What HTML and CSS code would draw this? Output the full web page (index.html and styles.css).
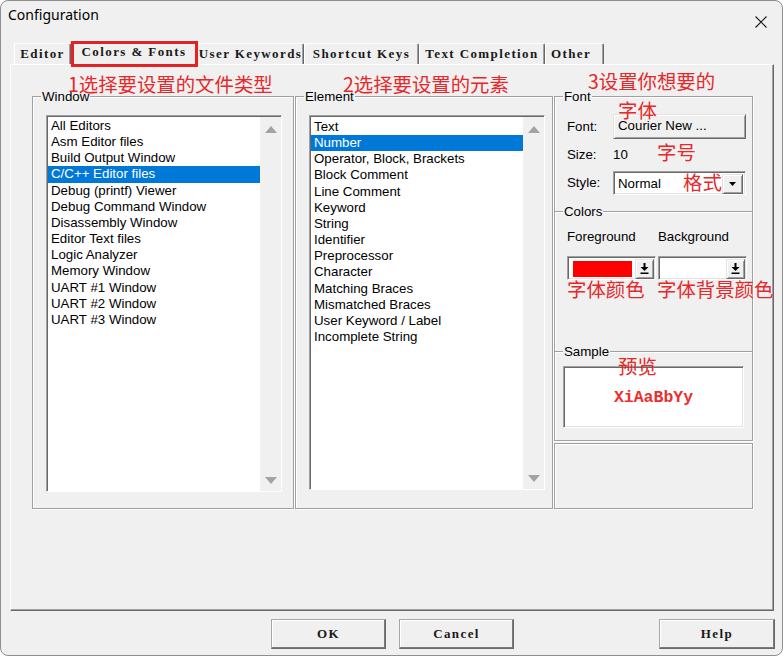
FILE: index.html
```html
<!DOCTYPE html>
<html>
<head>
<meta charset="utf-8">
<title>Configuration</title>
<link rel="stylesheet" href="styles.css">
</head>
<body>
<div class="window">
  <div class="titlebar">
    <span class="title">Configuration</span>
    <svg class="close" width="12" height="12" viewBox="0 0 12 12"><path d="M0.5 0.5L11.5 11.5M11.5 0.5L0.5 11.5" stroke="#1a1a1a" stroke-width="1.1" fill="none"/></svg>
  </div>
  <div class="tabstrip">
    <div class="tab t-editor">Editor</div>
    <div class="tab tab-active t-colors">Colors &amp; Fonts</div>
    <div class="tab t-user">User Keywords</div>
    <div class="tab t-short">Shortcut Keys</div>
    <div class="tab t-text">Text Completion</div>
    <div class="tab t-other">Other</div>
  </div>
  <div class="panel">
    <div class="group group-window">
      <span class="group-label">Window</span>
      <div class="listbox list-window">
        <div class="items">
          <div class="item">All Editors</div>
          <div class="item">Asm Editor files</div>
          <div class="item">Build Output Window</div>
          <div class="item sel">C/C++ Editor files</div>
          <div class="item">Debug (printf) Viewer</div>
          <div class="item">Debug Command Window</div>
          <div class="item">Disassembly Window</div>
          <div class="item">Editor Text files</div>
          <div class="item">Logic Analyzer</div>
          <div class="item">Memory Window</div>
          <div class="item">UART #1 Window</div>
          <div class="item">UART #2 Window</div>
          <div class="item">UART #3 Window</div>
        </div>
        <div class="scroll"><span class="tri-up"></span><span class="tri-down"></span></div>
      </div>
    </div>
    <div class="group group-element">
      <span class="group-label">Element</span>
      <div class="listbox list-element">
        <div class="items">
          <div class="item">Text</div>
          <div class="item sel">Number</div>
          <div class="item">Operator, Block, Brackets</div>
          <div class="item">Block Comment</div>
          <div class="item">Line Comment</div>
          <div class="item">Keyword</div>
          <div class="item">String</div>
          <div class="item">Identifier</div>
          <div class="item">Preprocessor</div>
          <div class="item">Character</div>
          <div class="item">Matching Braces</div>
          <div class="item">Mismatched Braces</div>
          <div class="item">User Keyword / Label</div>
          <div class="item">Incomplete String</div>
        </div>
        <div class="scroll"><span class="tri-up"></span><span class="tri-down"></span></div>
      </div>
    </div>
    <div class="rightcol">
      <div class="group group-font">
        <span class="group-label">Font</span>
        <div class="form-grid">
          <span class="flabel">Font:</span>
          <div class="raised font-btn">Courier New ...</div>
          <span class="flabel">Size:</span>
          <span class="fvalue">10</span>
          <span class="flabel">Style:</span>
          <div class="sunken style-combo">
            <span class="combo-text">Normal</span>
            <div class="raised drop-btn"><svg width="7" height="4" viewBox="0 0 7 4"><path d="M0 0H7L3.5 4Z" fill="#000"/></svg></div>
          </div>
        </div>
      </div>
      <div class="group group-colors">
        <span class="group-label">Colors</span>
        <div class="color-grid">
          <span class="color-label">Foreground</span>
          <span class="color-label">Background</span>
          <div class="sunken color-combo">
            <span class="swatch swatch-red"></span>
            <div class="raised color-drop"><svg width="9" height="11" viewBox="0 0 9 11"><path d="M3.5 0H5.5V4H8.5L4.5 8L0.5 4H3.5Z M0.5 9.5H8.5V11H0.5Z" fill="#000"/></svg></div>
          </div>
          <div class="sunken color-combo">
            <span class="swatch swatch-white"></span>
            <div class="raised color-drop"><svg width="9" height="11" viewBox="0 0 9 11"><path d="M3.5 0H5.5V4H8.5L4.5 8L0.5 4H3.5Z M0.5 9.5H8.5V11H0.5Z" fill="#000"/></svg></div>
          </div>
        </div>
      </div>
      <div class="group group-sample">
        <span class="group-label">Sample</span>
        <div class="sunken sample-box">XiAaBbYy</div>
      </div>
      <div class="group group-empty"></div>
    </div>
  </div>
  <div class="buttons">
    <div class="dlg-btn">OK</div>
    <div class="dlg-btn btn-cancel">Cancel</div>
    <div class="dlg-btn btn-help">Help</div>
  </div>

  <div class="mark-tab"></div>
  <span class="note n1">1选择要设置的文件类型</span>
  <span class="note n2">2选择要设置的元素</span>
  <span class="note n3">3设置你想要的</span>
  <span class="note n4">字体</span>
  <span class="note n5">字号</span>
  <span class="note n6">格式</span>
  <span class="note n7">字体颜色</span>
  <span class="note n8">字体背景颜色</span>
  <span class="note n9">预览</span>
</div>
</body>
</html>
```

FILE: styles.css
```css
* { box-sizing: border-box; }
html, body { margin: 0; padding: 0; }
body {
  width: 783px;
  height: 656px;
  overflow: hidden;
  background: #ffffff;
  font-family: "Liberation Sans", Arial, sans-serif;
  font-size: 13.3px;
  color: #000;
}
.window {
  position: relative;
  width: 783px;
  height: 656px;
  background: #f0f0f0;
  border: 1px solid #8e8e8e;
  border-radius: 8px;
  display: flex;
  flex-direction: column;
  overflow: hidden;
}
.titlebar {
  height: 39px;
  flex: none;
  display: flex;
  align-items: flex-start;
  justify-content: space-between;
  padding: 4px 15px 0 7px;
}
.title {
  font-family: "Noto Sans", "Open Sans", sans-serif;
  font-size: 14px;
  line-height: 20px;
  color: #000;
}
.close { margin-top: 11px; }

/* tabs */
.tabstrip {
  height: 24px;
  flex: none;
  display: flex;
  align-items: flex-end;
  padding-left: 13px;
  position: relative;
  z-index: 1;
}
.tab {
  height: 21px;
  border-top: 1px solid #ffffff;
  border-left: 1px solid #ffffff;
  border-right: 1px solid #696969;
  box-shadow: inset -1px 0 0 #a0a0a0;
  border-radius: 2px 2px 0 0;
  background: #f0f0f0;
  font-family: "Liberation Serif", "Times New Roman", serif;
  font-weight: bold;
  font-size: 13px;
  letter-spacing: 1.4px;
  line-height: 20px;
  text-align: center;
  white-space: nowrap;
  color: #1a1a1a;
}
.tab-active {
  height: 25px;
  margin-bottom: -1px;
  line-height: 22px;
}
.t-editor { width: 57px; }
.t-colors { width: 126px; }
.t-user { width: 107px; }
.t-short { width: 115px; }
.t-text { width: 126px; }
.t-other { width: 59px; text-align: left; padding-left: 5px; }

/* panel */
.panel {
  flex: none;
  margin-left: 9px;
  width: 764px;
  height: 547px;
  border: 1px solid;
  border-color: #ffffff #696969 #696969 #ffffff;
  box-shadow: inset -1px -1px 0 #a0a0a0;
  display: flex;
  align-items: flex-start;
  padding: 31px 0 0 21px;
}
.group {
  position: relative;
  border: 1px solid #a0a0a0;
  box-shadow: inset 1px 1px 0 #ffffff, 1px 1px 0 #ffffff;
}
.group-label {
  position: absolute;
  top: -8px;
  left: 8px;
  padding: 0 1px;
  background: #f0f0f0;
  line-height: 15px;
  white-space: nowrap;
}
.group-window {
  width: 262px;
  height: 413px;
  padding: 18px 0 0 13px;
}
.group-element {
  margin-left: 1px;
  width: 258px;
  height: 413px;
  padding: 18px 0 0 13px;
}

/* list boxes */
.listbox {
  display: flex;
  background: #ffffff;
  border: 1px solid;
  border-color: #a0a0a0 #ffffff #ffffff #a0a0a0;
  box-shadow: inset 1px 1px 0 #696969;
  padding: 1px 0 0 1px;
}
.list-window { width: 236px; height: 377px; }
.list-element { width: 236px; height: 375px; }
.items { flex: 1; padding-top: 1px; }
.list-element .items { padding-top: 2px; }
.item {
  height: 16.17px;
  line-height: 16px;
  padding-left: 3px;
  white-space: nowrap;
}
.item.sel { background: #0078d7; color: #ffffff; }
.scroll {
  width: 21px;
  flex: none;
  background: #f0f0f0;
  display: flex;
  flex-direction: column;
  justify-content: space-between;
  align-items: center;
  padding: 9px 0 7px;
}
.tri-up, .tri-down {
  width: 0;
  height: 0;
  border-left: 6px solid transparent;
  border-right: 6px solid transparent;
}
.tri-up { border-bottom: 7px solid #a3a3a3; }
.tri-down { border-top: 7px solid #a3a3a3; }

/* right column */
.rightcol {
  margin-left: 1px;
  width: 199px;
  display: flex;
  flex-direction: column;
}
.group-font {
  height: 116px;
  margin-bottom: -1px;
  padding: 17px 0 0 12px;
}
.form-grid {
  display: grid;
  grid-template-columns: 46px 133px;
  grid-template-rows: 25px 32px 24px;
  align-items: center;
}
.flabel, .fvalue { line-height: 16px; }
.raised {
  background: #f0f0f0;
  border: 1px solid;
  border-color: #e3e3e3 #696969 #696969 #e3e3e3;
  box-shadow: inset 1px 1px 0 #ffffff, inset -1px -1px 0 #a0a0a0;
}
.sunken {
  background: #ffffff;
  border: 1px solid;
  border-color: #a0a0a0 #ffffff #ffffff #a0a0a0;
  box-shadow: inset 1px 1px 0 #696969, inset -1px -1px 0 #e3e3e3;
}
.font-btn {
  height: 25px;
  padding-left: 4px;
  line-height: 22px;
  white-space: nowrap;
}
.style-combo {
  height: 24px;
  display: flex;
  align-items: center;
  padding: 2px 2px 1px 4px;
}
.combo-text { flex: 1; line-height: 16px; }
.drop-btn {
  width: 21px;
  height: 20px;
  display: flex;
  align-items: center;
  justify-content: center;
}

.group-colors {
  height: 141px;
  margin-bottom: -1px;
  padding: 17px 0 0 12px;
}
.color-grid {
  display: grid;
  grid-template-columns: 89px 89px;
  column-gap: 2px;
}
.color-label { line-height: 16px; white-space: nowrap; }
.color-combo {
  margin-top: 11px;
  height: 24px;
  display: flex;
  align-items: center;
  padding: 2px 1px 1px 2px;
}
.swatch {
  margin-left: 3px;
  width: 59px;
  height: 16px;
}
.swatch-red { background: #ff0000; }
.swatch-white { background: #ffffff; }
.color-drop {
  margin-left: auto;
  width: 19px;
  height: 20px;
  display: flex;
  align-items: center;
  justify-content: center;
}

.group-sample {
  height: 90px;
  padding: 14px 0 0 8px;
}
.sample-box {
  width: 181px;
  height: 62px;
  display: flex;
  align-items: center;
  justify-content: center;
  font-family: "Liberation Mono", "Courier New", monospace;
  font-weight: bold;
  font-size: 16.5px;
  color: #ec2e2e;
}
.group-empty {
  margin-top: 2px;
  height: 66px;
}

/* bottom buttons */
.buttons {
  flex: none;
  display: flex;
  padding: 8px 7px 0 270px;
}
.dlg-btn {
  width: 115px;
  height: 30px;
  background: #f0f0f0;
  border: 1px solid;
  border-color: #a8a8a8 #696969 #696969 #a8a8a8;
  box-shadow: inset -1px -1px 0 #7a7a7a, inset 1px 1px 0 #ffffff;
  display: flex;
  align-items: center;
  justify-content: center;
  font-family: "Liberation Serif", "Times New Roman", serif;
  font-weight: bold;
  font-size: 13px;
  letter-spacing: 1.4px;
  color: #1a1a1a;
}
.btn-cancel { margin-left: 13px; }
.btn-help { margin-left: auto; width: 116px; }

/* red annotations (overlay) */
.mark-tab {
  position: absolute;
  left: 70px;
  top: 40px;
  width: 127px;
  height: 26px;
  border: 3px solid #e42124;
  z-index: 3;
}
.note {
  position: absolute;
  z-index: 3;
  font-family: "Noto Sans CJK SC", "Noto Sans", sans-serif;
  font-size: 19.4px;
  line-height: 19px;
  color: #e6282a;
  white-space: nowrap;
}
.n1 { left: 67px; top: 73px; }
.n2 { left: 342px; top: 73px; }
.n3 { left: 587px; top: 70px; }
.n4 { left: 617px; top: 99px; }
.n5 { left: 656px; top: 141px; }
.n6 { left: 682px; top: 171px; }
.n7 { left: 566px; top: 278px; }
.n8 { left: 656px; top: 278px; }
.n9 { left: 617px; top: 355px; }
```
